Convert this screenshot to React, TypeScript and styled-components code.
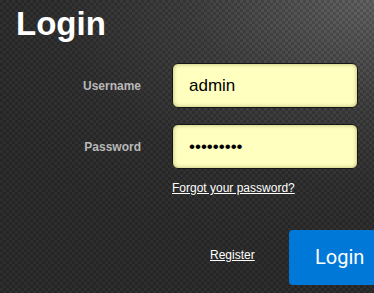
import React from "react";
import styled, { createGlobalStyle } from "styled-components";

const Global = createGlobalStyle`
  html, body {
    margin: 0;
    padding: 0;
    overflow: hidden;
    background: #2b2b2b;
  }
  * { box-sizing: border-box; }
`;

const Page = styled.div`
  position: relative;
  width: 100vw;
  height: 100vh;
  overflow: hidden;
  padding: 7px 0 0 16px;
  font-family: "Liberation Sans", Arial, sans-serif;
  background:
    repeating-conic-gradient(rgba(0, 0, 0, 0.13) 0 25%, rgba(255, 255, 255, 0.02) 0 50%) 0 0 / 6px 6px,
    radial-gradient(ellipse 120% 90% at 100% 0%, #606060 0%, #3d3d3d 40%, #2e2e2e 70%, #2a2a2a 100%);
`;

const Title = styled.h1`
  margin: 0;
  font-size: 33px;
  line-height: 33px;
  font-weight: bold;
  color: #ffffff;
`;

const Form = styled.form`
  display: flex;
  flex-direction: column;
  margin-top: 23px;
`;

const FieldRow = styled.div`
  display: flex;
  align-items: center;
  gap: 31px;
  & + & {
    margin-top: 16px;
  }
`;

const Label = styled.label`
  width: 125px;
  text-align: right;
  font-size: 12px;
  font-weight: bold;
  color: #b9b9b9;
`;

const Input = styled.input`
  width: 186px;
  height: 45px;
  border: 1px solid #161616;
  border-radius: 6px;
  background: #ffffc0;
  box-shadow: inset 0 0 4px rgba(120, 120, 40, 0.55);
  padding: 0 16px;
  font-family: "Liberation Sans", Arial, sans-serif;
  font-size: 17px;
  color: #000;
  outline: none;
`;

const LinkRow = styled.div`
  padding-left: 156px;
  margin-top: 9px;
`;

const TextLink = styled.a`
  font-size: 12px;
  line-height: 14px;
  color: #ffffff;
  text-decoration: underline;
  cursor: pointer;
`;

const Actions = styled.div`
  display: flex;
  align-items: center;
  gap: 34px;
  padding-left: 194px;
  margin-top: 34px;
`;

const RegisterLink = styled(TextLink)`
  margin-bottom: 5px;
`;

const LoginButton = styled.button`
  flex-shrink: 0;
  width: 102px;
  height: 55px;
  border: none;
  border-radius: 4px;
  background: #0078d7;
  color: #ffffff;
  font-family: Roboto, "Liberation Sans", sans-serif;
  font-size: 20px;
  padding: 0 0 2px;
`;

export default function App() {
  return (
    <>
      <Global />
      <Page>
        <Title>Login</Title>
        <Form onSubmit={(e) => e.preventDefault()}>
          <FieldRow>
            <Label>Username</Label>
            <Input type="text" defaultValue="admin" readOnly />
          </FieldRow>
          <FieldRow>
            <Label>Password</Label>
            <Input type="password" defaultValue="123456789" readOnly />
          </FieldRow>
          <LinkRow>
            <TextLink>Forgot your password?</TextLink>
          </LinkRow>
          <Actions>
            <RegisterLink>Register</RegisterLink>
            <LoginButton type="button">Login</LoginButton>
          </Actions>
        </Form>
      </Page>
    </>
  );
}
